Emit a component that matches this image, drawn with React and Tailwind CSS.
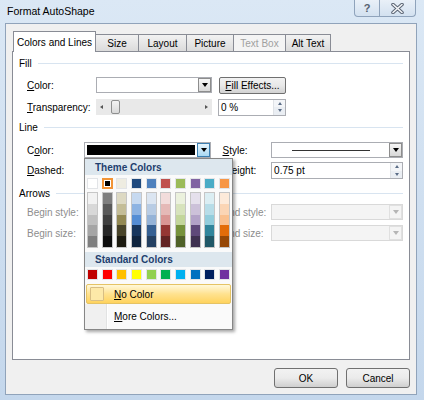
import React from "react";

const THEME_TOP = ["#FFFFFF", "#000000", "#EEECE1", "#1F497D", "#4F81BD", "#C0504D", "#9BBB59", "#8064A2", "#4BACC6", "#F79646"];

const THEME_SHADES = [
  ["#F2F2F2", "#D8D8D8", "#BFBFBF", "#A5A5A5", "#7F7F7F"],
  ["#7F7F7F", "#595959", "#3F3F3F", "#262626", "#0C0C0C"],
  ["#DDD9C3", "#C4BD97", "#938953", "#494429", "#1D1B10"],
  ["#C6D9F0", "#8DB3E2", "#548DD4", "#17365D", "#0F243E"],
  ["#DBE5F1", "#B8CCE4", "#95B3D7", "#366092", "#244061"],
  ["#F2DCDB", "#E5B9B7", "#D99694", "#953734", "#632423"],
  ["#EBF1DD", "#D7E3BC", "#C3D69B", "#76923C", "#4F6128"],
  ["#E5E0EC", "#CCC1D9", "#B2A2C7", "#5F497A", "#3F3151"],
  ["#DBEEF3", "#B7DDE8", "#92CDDC", "#31859B", "#205867"],
  ["#FDEADA", "#FBD5B5", "#FAC08F", "#E36C09", "#974806"],
];

const STANDARD = ["#C00000", "#FF0000", "#FFC000", "#FFFF00", "#92D050", "#00B050", "#00B0F0", "#0070C0", "#002060", "#7030A0"];

const TABS = [
  { label: "Size", w: "w-[44px]" },
  { label: "Layout", w: "w-[49px]" },
  { label: "Picture", w: "w-[48px]" },
  { label: "Text Box", w: "w-[53px]", disabled: true },
  { label: "Alt Text", w: "w-[46px]" },
];

function DownArrow({ disabled }) {
  return (
    <span
      className={`block h-0 w-0 border-x-[3px] border-t-[4px] border-x-transparent ${
        disabled ? "border-t-[#b5b5b5]" : "border-t-black"
      }`}
    />
  );
}

function Combo({ w, children, disabled, active }) {
  return (
    <div className={`flex h-[16px] ${w} border ${disabled ? "border-[#d9d9d9] bg-[#f4f4f4]" : "border-[#abadb3] bg-white"}`}>
      <div className="flex min-w-0 flex-1 items-center">{children}</div>
      <div
        className={`flex w-[13px] items-center justify-center border ${
          active
            ? "border-[#3c7fb1] bg-gradient-to-b from-[#e5f4fc] to-[#a9d9f3]"
            : disabled
            ? "border-[#e0e0e0] bg-[#f4f4f4]"
            : "border-[#8d8d8d] bg-gradient-to-b from-[#f6f6f6] to-[#d8d8d8]"
        }`}
      >
        <DownArrow disabled={disabled} />
      </div>
    </div>
  );
}

function Spin({ w, value }) {
  return (
    <div className={`flex h-[17px] ${w} border border-[#abadb3] bg-white`}>
      <div className="flex flex-1 items-center pl-[2px]">{value}</div>
      <div className="flex w-[12px] flex-col border-l border-[#dfe2e6]">
        <div className="flex flex-1 items-center justify-center bg-[#f3f5f8]">
          <span className="block h-0 w-0 border-x-[2.5px] border-b-[3px] border-x-transparent border-b-[#5b6d87]" />
        </div>
        <div className="flex flex-1 items-center justify-center bg-[#eaeef3]">
          <span className="block h-0 w-0 border-x-[2.5px] border-t-[3px] border-x-transparent border-t-[#5b6d87]" />
        </div>
      </div>
    </div>
  );
}

function SectionHead({ label, className }) {
  return (
    <div className={`flex h-[14px] items-center gap-[6px] ${className}`}>
      <span>{label}</span>
      <div className="h-px flex-1 bg-[#d8e4f0]" />
    </div>
  );
}

function Swatch({ color, selected }) {
  if (selected) {
    return (
      <div className="h-[11px] w-[11px] border-[2px] border-[#f29436] p-0">
        <div className="h-full w-full border border-white" style={{ backgroundColor: color }} />
      </div>
    );
  }
  return <div className="h-[11px] w-[11px] border border-[#e2e4e7]" style={{ backgroundColor: color }} />;
}

function ColorPopup() {
  return (
    <div className="absolute left-[71px] top-[106px] z-20 flex h-[172px] w-[149px] flex-col border border-[#868686] bg-[#fafafa] shadow-[2px_2px_3px_rgba(0,0,0,0.35)]">
      <div className="flex h-[16px] items-center bg-[#dde7ee] pl-[10px] font-bold text-[#1f3f6e]">Theme Colors</div>
      <div className="mt-[3px] flex justify-between px-[2px]">
        {THEME_TOP.map((c, i) => (
          <Swatch key={c} color={c} selected={i === 1} />
        ))}
      </div>
      <div className="mt-[3px] flex justify-between px-[2px]">
        {THEME_SHADES.map((col, i) => (
          <div key={i} className="flex h-[56px] w-[11px] flex-col border border-[#c6c6c6]">
            {col.map((c) => (
              <div key={c} className="flex-1" style={{ backgroundColor: c }} />
            ))}
          </div>
        ))}
      </div>
      <div className="mt-[4px] flex h-[15px] items-center bg-[#dde7ee] pl-[10px] font-bold text-[#1f3f6e]">Standard Colors</div>
      <div className="mt-[2px] flex justify-between px-[2px]">
        {STANDARD.map((c) => (
          <Swatch key={c} color={c} />
        ))}
      </div>
      <div className="mx-[1px] mt-[4px] flex h-[20px] items-center rounded-[2px] border border-[#e5c365] bg-gradient-to-b from-[#fff8d9] via-[#ffe28f] to-[#ffd35c]">
        <div className="ml-[3px] h-[14px] w-[14px] rounded-[1px] border border-[#d8be84] bg-[#fde9a8]" />
        <span className="ml-[10px]">
          <u>N</u>o Color
        </span>
      </div>
      <div className="flex flex-1">
        <div className="w-[22px] border-r border-[#e2e3e3] bg-[#f0f0f0]" />
        <div className="flex flex-1 items-center border-l border-white pl-[6px]">
          <span>
            <u>M</u>ore Colors...
          </span>
        </div>
      </div>
    </div>
  );
}

function CloseGlyph() {
  return (
    <svg width="13" height="11" viewBox="0 0 13 11">
      <path d="M2 1.5 L11 9.5 M11 1.5 L2 9.5" stroke="#5a6473" strokeWidth="3.6" strokeLinecap="round" />
      <path d="M2 1.5 L11 9.5 M11 1.5 L2 9.5" stroke="#f4f6f9" strokeWidth="1.6" strokeLinecap="round" />
    </svg>
  );
}

export default function App() {
  return (
    <div className="flex h-[400px] w-[424px] flex-col bg-gradient-to-b from-[#dbe8f5] via-[#cfdff0] to-[#c4d7ec] font-['Liberation_Sans',Arial,sans-serif] text-[10px] text-black">
      <div className="flex h-[23px] items-start">
        <div className="ml-[7px] mt-[6px] text-[10.5px] leading-none">Format AutoShape</div>
        <div className="ml-auto mr-[8px] flex h-[17px]">
          <div className="flex w-[26px] items-center justify-center rounded-bl-[4px] border border-t-0 border-[#8fa3bb] bg-gradient-to-b from-[#e9f0f8] to-[#d3e1f0] text-[11px] font-bold text-[#55606e]">
            ?
          </div>
          <div className="-ml-px flex w-[37px] items-center justify-center rounded-br-[4px] border border-t-0 border-[#8fa3bb] bg-gradient-to-b from-[#e9f0f8] to-[#d3e1f0]">
            <CloseGlyph />
          </div>
        </div>
      </div>

      <div className="mb-[5px] ml-[5px] mr-[7px] flex flex-1 flex-col border border-[#90a3ba] bg-[#f0f0f0] px-[6px] pt-[6px]">
        <div className="flex h-[21px] items-end pl-px">
          <div className="relative z-10 -mb-px flex h-[21px] w-[83px] items-center justify-center border border-b-0 border-[#898c95] bg-white">
            Colors and Lines
          </div>
          {TABS.map((t) => (
            <div
              key={t.label}
              className={`-ml-px flex h-[17px] ${t.w} items-center justify-center border border-b-0 border-[#898c95] ${
                t.disabled ? "bg-[#f4f4f4] text-[#a0a0a0]" : "bg-gradient-to-b from-[#f2f2f2] to-[#dbdbdb]"
              }`}
            >
              {t.label}
            </div>
          ))}
        </div>

        <div className="relative flex h-[309px] flex-col border border-[#898c95] bg-white px-[6px]">
          <SectionHead label="Fill" className="mt-[4px]" />

          <div className="mt-[6px] flex h-[18px] items-center pl-[8px]">
            <span className="w-[69px]">
              <u>C</u>olor:
            </span>
            <Combo w="w-[116px]" />
            <div className="ml-[7px] flex h-[17px] w-[67px] items-center justify-center rounded-[2px] border border-[#707070] bg-gradient-to-b from-[#f2f2f2] via-[#e8e8e8] to-[#d2d2d2]">
              <span>
                <u>F</u>ill Effects...
              </span>
            </div>
          </div>

          <div className="mt-[4px] flex h-[18px] items-center pl-[8px]">
            <span className="w-[69px]">
              <u>T</u>ransparency:
            </span>
            <div className="flex h-[16px] w-[116px] items-center bg-[#e9e9e9]">
              <span className="ml-[4px] block h-0 w-0 border-y-[2.5px] border-r-[3px] border-y-transparent border-r-[#555]" />
              <div className="ml-[8px] h-[14px] w-[9px] rounded-[2px] border border-[#8e8f8f] bg-gradient-to-b from-[#f3f3f3] to-[#d9d9d9]" />
              <span className="ml-auto mr-[4px] block h-0 w-0 border-y-[2.5px] border-l-[3px] border-y-transparent border-l-[#555]" />
            </div>
            <div className="ml-[6px]">
              <Spin w="w-[68px]" value="0 %" />
            </div>
          </div>

          <SectionHead label="Line" className="mt-[4px]" />

          <div className="mt-[8px] flex h-[16px] items-center pl-[8px]">
            <span className="w-[57px]">
              C<u>o</u>lor:
            </span>
            <Combo w="w-[129px]" active>
              <div className="mx-[2px] h-[10px] flex-1 bg-black" />
            </Combo>
            <span className="ml-[11px] w-[49px]">
              <u>S</u>tyle:
            </span>
            <Combo w="w-[133px]">
              <div className="mx-auto h-px w-[78px] bg-[#333]" />
            </Combo>
          </div>

          <div className="mt-[4px] flex h-[17px] items-center pl-[8px]">
            <span className="w-[57px]">
              <u>D</u>ashed:
            </span>
            <Combo w="w-[129px]" />
            <span className="ml-[11px] w-[49px]">
              <u>W</u>eight:
            </span>
            <Spin w="w-[133px]" value="0.75 pt" />
          </div>

          <SectionHead label="Arrows" className="mt-[7px]" />

          <div className="mt-[4px] flex h-[16px] items-center pl-[8px] text-[#8d8d8d]">
            <span className="w-[57px]">Begin style:</span>
            <Combo w="w-[129px]" disabled />
            <span className="ml-[11px] w-[49px]">End style:</span>
            <Combo w="w-[133px]" disabled />
          </div>

          <div className="mt-[5px] flex h-[16px] items-center pl-[8px] text-[#8d8d8d]">
            <span className="w-[57px]">Begin size:</span>
            <Combo w="w-[129px]" disabled />
            <span className="ml-[11px] w-[49px]">End size:</span>
            <Combo w="w-[133px]" disabled />
          </div>

          <ColorPopup />
        </div>

        <div className="mt-[8px] flex justify-end gap-[8px]">
          <div className="flex h-[20px] w-[64px] items-center justify-center rounded-[3px] border border-[#707070] bg-gradient-to-b from-[#f2f2f2] via-[#ebebeb] to-[#cfcfcf]">
            OK
          </div>
          <div className="flex h-[20px] w-[64px] items-center justify-center rounded-[3px] border border-[#707070] bg-gradient-to-b from-[#f2f2f2] via-[#ebebeb] to-[#cfcfcf]">
            Cancel
          </div>
        </div>
      </div>
    </div>
  );
}
